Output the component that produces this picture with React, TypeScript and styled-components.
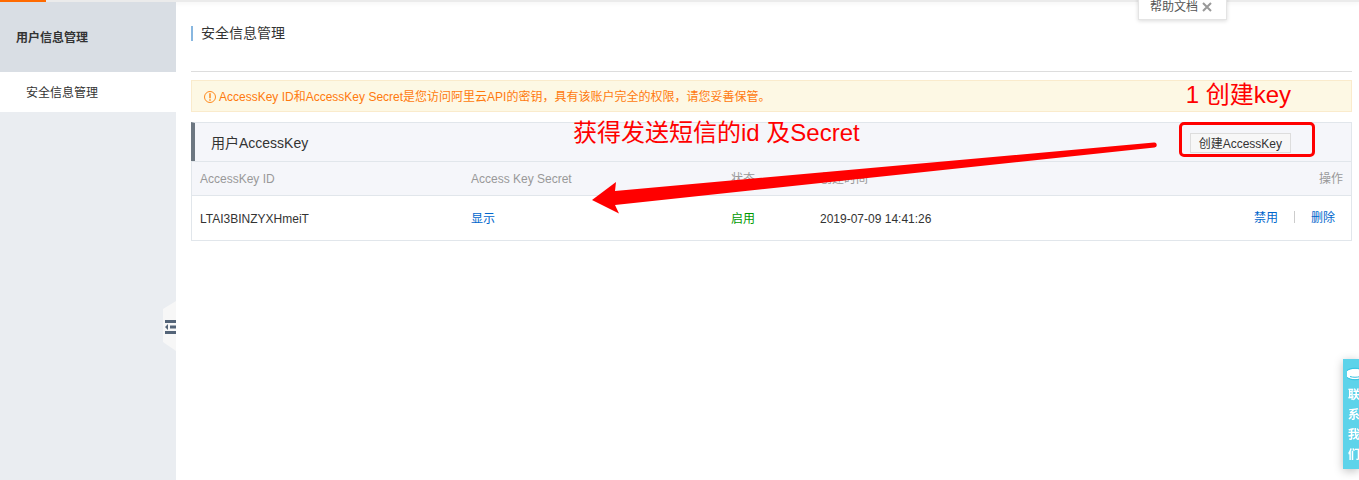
import React from "react";
import styled, { createGlobalStyle } from "styled-components";

const GlobalStyle = createGlobalStyle`
  * { box-sizing: border-box; }
  body {
    margin: 0;
    background: #fff;
    color: #333;
    font: 12px/20px "Liberation Sans", "Noto Sans CJK SC", sans-serif;
    overflow-x: hidden;
  }
  a { text-decoration: none; }
  h1, h2, p { margin: 0; font-weight: 400; }
`;

const Page = styled.div`
  display: flex;
  flex-direction: column;
  min-height: 100vh;
`;

const TopBar = styled.header`
  height: 2px;
  background: #ebebeb;
  box-shadow: 0 1px 4px rgba(0, 0, 0, 0.08);
`;

const ActiveMark = styled.div`
  width: 46px;
  height: 2px;
  background: #ff6a00;
`;

const Body = styled.div`
  display: flex;
  flex: 1;
`;

const Sidebar = styled.nav`
  position: relative;
  flex: 0 0 176px;
  background: #eaedf1;
`;

const SidebarTitle = styled.h2`
  padding: 2px 16px 0;
  font-size: 12px;
  font-weight: 700;
  line-height: 68px;
  background: #d9dee4;
`;

const SidebarLink = styled.a`
  display: block;
  padding: 2px 26px 0;
  line-height: 38px;
  color: #333;
  background: #fff;
`;

const CollapseButton = styled.button`
  position: absolute;
  top: 298px;
  right: 0;
  width: 13px;
  height: 52px;
  padding: 0;
  border: 0;
  background: none;
  svg { display: block; }
`;

const Main = styled.main`
  flex: 1;
  min-width: 0;
  padding: 0 7px 0 15px;
`;

const TitleBar = styled.div`
  height: 70px;
  padding-top: 21px;
  border-bottom: 1px solid #ddd;
`;

const Title = styled.h1`
  display: flex;
  align-items: center;
  gap: 8px;
  font-size: 14px;
  line-height: 20px;
  &::before {
    content: "";
    width: 2px;
    height: 15px;
    background: #88b7e0;
  }
`;

const Notice = styled.p`
  display: flex;
  align-items: center;
  gap: 3px;
  height: 32px;
  margin: 8px 0 10px;
  padding: 2px 12px 0;
  color: #ff7a0e;
  background: #fdf8e4;
  border: 1px solid #faebcc;
`;

const Panel = styled.section`
  position: relative;
  border: 1px solid #e1e6eb;
`;

const PanelHeader = styled.div`
  display: flex;
  align-items: center;
  justify-content: space-between;
  height: 39px;
  margin: -1px 0 0 -1px;
  padding: 0 60px 0 16px;
  background: #f5f6fa;
  border-top: 1px solid #e1e6eb;
  border-left: 4px solid #6d7781;
`;

const PanelTitle = styled.h2`
  padding-top: 2px;
  font-size: 14px;
`;

const CreateWrap = styled.div`
  position: relative;
`;

const CreateButton = styled.button`
  display: block;
  height: 20px;
  margin-top: 2px;
  padding: 2px 8px 0;
  font: inherit;
  line-height: 16px;
  color: #333;
  background: #f7f7f7;
  border: 1px solid #ddd;
`;

const CreateHighlight = styled.div`
  position: absolute;
  inset: -9px -24px -4px -11px;
  border: 3px solid #f00;
  border-radius: 5px;
  pointer-events: none;
`;

const Annotation = styled.span<{ $x: number; $y: number }>`
  position: absolute;
  left: ${(p) => p.$x}px;
  top: ${(p) => p.$y}px;
  font-size: 24px;
  line-height: 30px;
  white-space: nowrap;
  color: #f00;
  pointer-events: none;
`;

const Arrow = styled.svg`
  position: absolute;
  left: 400px;
  top: 16px;
  pointer-events: none;
`;

const KeyTable = styled.table`
  width: 100%;
  table-layout: fixed;
  border-collapse: collapse;
  th, td { padding: 0 8px; text-align: left; font-weight: 400; }
  th { height: 34px; color: #999; background: #f5f6fa; border-top: 1px solid #e1e6eb; }
  td { height: 44px; padding-top: 2px; border-top: 1px solid #e1e6eb; }
  th:last-child, td:last-child { text-align: right; }
  td:last-child { padding: 0 16px 0 8px; }
`;

const Column = styled.col<{ $width?: string }>`
  width: ${(p) => p.$width ?? "auto"};
`;

const ActionLink = styled.a`
  color: #06c;
`;

const Enabled = styled.span`
  color: #090;
`;

const Divider = styled.span`
  display: inline-block;
  width: 1px;
  height: 12px;
  margin: 0 16px;
  vertical-align: -1px;
  background: #ccc;
`;

const HelpTab = styled.div`
  position: absolute;
  top: -8px;
  right: 132px;
  display: flex;
  align-items: center;
  gap: 4px;
  height: 28px;
  padding: 2px 14px 0 11px;
  color: #555;
  background: #fff;
  border: 1px solid #e4e4e4;
  box-shadow: 0 1px 4px rgba(0, 0, 0, 0.15);
`;

const CloseButton = styled.button`
  padding: 0;
  border: 0;
  background: none;
  svg { display: block; }
`;

const ContactTab = styled.a`
  position: fixed;
  right: 0;
  top: 359px;
  width: 16px;
  height: 110px;
  padding: 8px 0 0 5px;
  overflow: hidden;
  color: #fff;
  font-weight: 700;
  background: #5dd3ea;
  box-shadow: 0 2px 10px rgba(0, 0, 0, 0.25);
  svg { display: block; margin-left: -2px; }
  span { display: block; width: 12px; }
`;

export default function App() {
  return (
    <Page>
      <GlobalStyle />
      <TopBar><ActiveMark /></TopBar>
      <Body>
        <Sidebar>
          <SidebarTitle>用户信息管理</SidebarTitle>
          <SidebarLink href="#security">安全信息管理</SidebarLink>
          <CollapseButton aria-label="Collapse">
            <svg width="13" height="52" viewBox="0 0 13 52">
              <path d="M13 1 0 9v33l13 9z" fill="#f7f7f7" />
              <path d="M2 20h11v3H2zM7 25.500h6v3H7zM2 31h11v3H2zM2 27l3-3v6z" fill="#546478" />
            </svg>
          </CollapseButton>
        </Sidebar>
        <Main>
          <TitleBar><Title>安全信息管理</Title></TitleBar>
          <Notice>
            <svg width="12" height="12" viewBox="0 0 12 12" fill="none" stroke="#ff8a1e">
              <circle cx="6" cy="6" r="5.5" />
              <path d="M6 2.3v5M6 8.2v1.500" strokeWidth="1.5" />
            </svg>
            AccessKey ID和AccessKey Secret是您访问阿里云API的密钥，具有该账户完全的权限，请您妥善保管。
          </Notice>
          <Panel>
            <PanelHeader>
              <PanelTitle>用户AccessKey</PanelTitle>
              <CreateWrap>
                <CreateButton>创建AccessKey</CreateButton>
                <CreateHighlight />
                <Annotation $x={-4} $y={-51}>1 创建key</Annotation>
              </CreateWrap>
            </PanelHeader>
            <KeyTable>
              <colgroup>
                <Column $width="271px" />
                <Column $width="260px" />
                <Column $width="89px" />
                <Column />
                <Column $width="200px" />
              </colgroup>
              <thead>
                <tr>
                  <th>AccessKey ID</th>
                  <th>Access Key Secret</th>
                  <th>状态</th>
                  <th>创建时间</th>
                  <th>操作</th>
                </tr>
              </thead>
              <tbody>
                <tr>
                  <td>LTAI3BINZYXHmeiT</td>
                  <td><ActionLink href="#show">显示</ActionLink></td>
                  <td><Enabled>启用</Enabled></td>
                  <td>2019-07-09 14:41:26</td>
                  <td>
                    <ActionLink href="#disable">禁用</ActionLink>
                    <Divider />
                    <ActionLink href="#delete">删除</ActionLink>
                  </td>
                </tr>
              </tbody>
            </KeyTable>
            <Annotation $x={381} $y={-5}>获得发送短信的id 及Secret</Annotation>
            <Arrow width="566" height="78" viewBox="0 0 566 78" fill="#f00">
              <path d="M0 61 24 43 23 52 562 3.500a2.500 2.500 0 0 1 .5 5L23 66 27 74.500z" />
            </Arrow>
          </Panel>
        </Main>
      </Body>
      <HelpTab>
        帮助文档
        <CloseButton aria-label="Close">
          <svg width="10" height="10" viewBox="0 0 10 10" stroke="#999" strokeWidth="2">
            <path d="m1 1 8 8M9 1 1 9" />
          </svg>
        </CloseButton>
      </HelpTab>
      <ContactTab href="#contact">
        <svg width="18" height="18" viewBox="0 0 18 18">
          <path d="M1 4c4-3 12-3 16 0v6c-4 3-12 3-16 0z" fill="#fff" />
          <path d="M1 3.500c4-3 12-3 16 0M4 9.500c3 1 7 1 10 0M1 10.500c4 3 12 3 16 0" fill="none" stroke="#32c3e2" />
        </svg>
        <span>联系我们</span>
      </ContactTab>
    </Page>
  );
}
